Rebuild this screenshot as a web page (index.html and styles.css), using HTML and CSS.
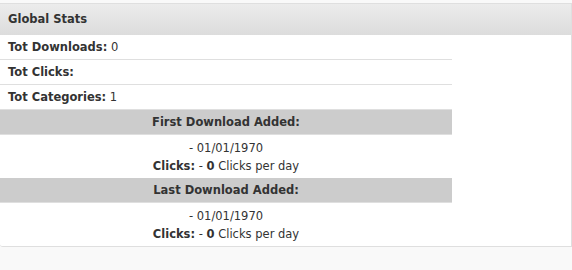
FILE: index.html
```html
<!DOCTYPE html>
<html lang="en">
<head>
  <meta charset="UTF-8">
  <title>Global Stats</title>
  <link rel="stylesheet" href="styles.css">
</head>
<body>

  <!-- Global stats box -->
  <div class="postbox">
    <h3 class="hndle">Global Stats</h3>
    <div class="inside">
      <table class="stats">
        <tr><td><b>Tot Downloads:</b> 0</td></tr>
        <tr><td><b>Tot Clicks:</b> </td></tr>
        <tr><td><b>Tot Categories:</b> 1</td></tr>
        <tr><th>First Download Added:</th></tr>
        <tr><td class="center"> - 01/01/1970<br><b>Clicks:</b> - <b>0</b> Clicks per day</td></tr>
        <tr><th>Last Download Added:</th></tr>
        <tr><td class="center"> - 01/01/1970<br><b>Clicks:</b> - <b>0</b> Clicks per day</td></tr>
      </table>
    </div>
  </div>

</body>
</html>
```

FILE: styles.css
```css
body {
  margin: 0;
  padding: 3px 0 0;
  background-color: #f9f9f9;
  font-family: "DejaVu Sans", Verdana, sans-serif;
  font-size: 11.5px;
  color: #333;
}

.postbox {
  background-color: #fff;
  border: 1px solid #dfdfdf;
  border-left: none;
  border-radius: 0 0 0 3px;
}

.hndle {
  margin: 0;
  height: 31px;
  line-height: 30px;
  padding: 0 8px;
  font-size: 11.5px;
  font-weight: bold;
  background: linear-gradient(to bottom, #ececec, #dcdcdc);
  color: #333;
}

.stats {
  width: 452px;
  border-collapse: collapse;
  font-size: 11.5px;
}

.stats td {
  padding: 0 8px;
  height: 24px;
  border-bottom: 1px solid #dfdfdf;
}

.stats th {
  height: 24px;
  padding: 0;
  background-color: #cccccc;
  font-weight: bold;
  text-align: center;
  border-bottom: 1px solid #dfdfdf;
}

.stats td.center {
  text-align: center;
  height: 43px;
  padding: 0 8px;
  line-height: 18px;
  border-bottom: none;
}
```
